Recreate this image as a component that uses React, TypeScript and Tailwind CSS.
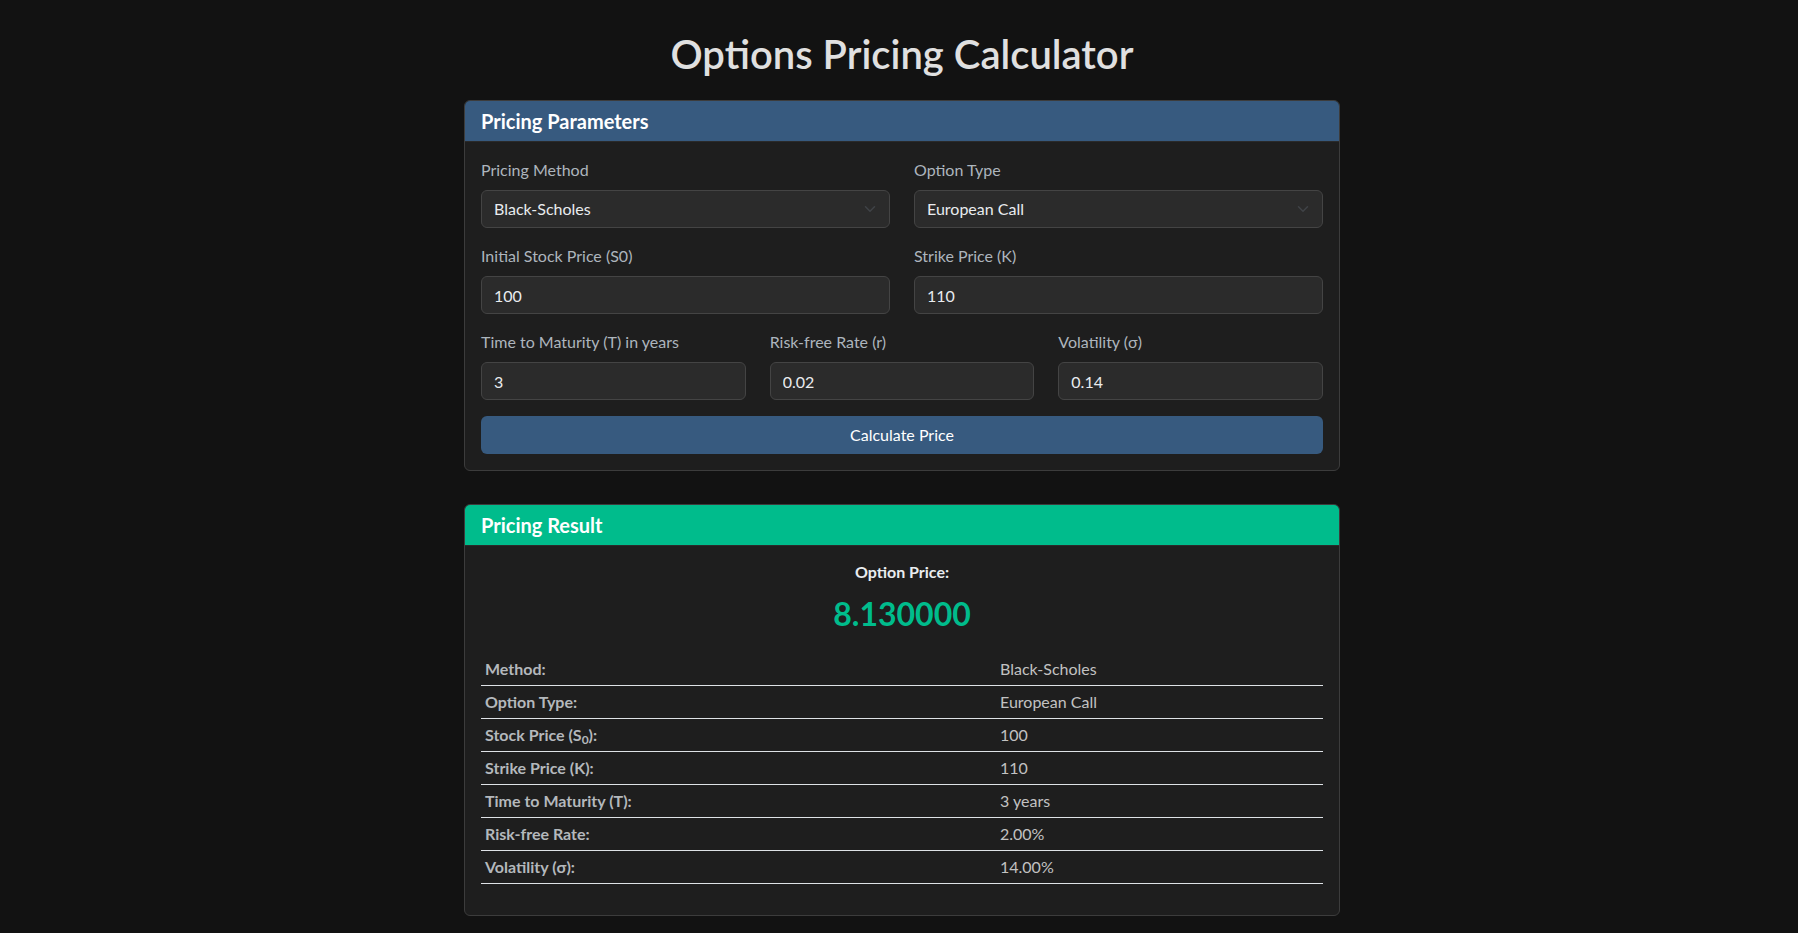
import React from "react";

const Chevron = () => (
  <svg
    className="pointer-events-none absolute right-[12px] top-1/2 -translate-y-1/2"
    width="16"
    height="12"
    viewBox="0 0 16 16"
    fill="none"
    stroke="#3f4246"
    strokeWidth="2"
    strokeLinecap="round"
    strokeLinejoin="round"
  >
    <path d="m2 5 6 6 6-6" />
  </svg>
);

const Label = ({ children }: { children: React.ReactNode }) => (
  <label className="block mb-2 text-[16px] leading-6 text-[#adb5bd]">{children}</label>
);

const inputCls =
  "block w-full h-[38px] px-3 rounded-[6px] border border-[#444444] bg-[#2b2b2b] text-[16px] leading-6 text-[#e9ecef] outline-none";

const SelectBox = ({ label, value }: { label: string; value: string }) => (
  <div className="mb-4">
    <Label>{label}</Label>
    <div className="relative">
      <select className={inputCls + " appearance-none"} defaultValue={value}>
        <option>{value}</option>
      </select>
      <Chevron />
    </div>
  </div>
);

const InputBox = ({ label, value }: { label: string; value: string }) => (
  <div className="mb-4">
    <Label>{label}</Label>
    <input className={inputCls} defaultValue={value} readOnly />
  </div>
);

const rows: { k: React.ReactNode; v: string }[] = [
  { k: "Method:", v: "Black-Scholes" },
  { k: "Option Type:", v: "European Call" },
  {
    k: (
      <>
        Stock Price (S<sub>0</sub>):
      </>
    ),
    v: "100",
  },
  { k: "Strike Price (K):", v: "110" },
  { k: "Time to Maturity (T):", v: "3 years" },
  { k: "Risk-free Rate:", v: "2.00%" },
  { k: "Volatility (σ):", v: "14.00%" },
];

export default function App() {
  return (
    <div
      className="min-h-screen bg-[#121212] pb-[18px]"
      style={{ fontFamily: "Lato, 'Open Sans', 'Noto Sans', sans-serif" }}
    >
      <div className="flex justify-center pl-[6px]">
        <div className="w-[876px]">
          <h1 className="pt-[30px] mb-[22px] text-center text-[40px] leading-[48px] font-semibold text-[#e0e0e0]">
            Options Pricing Calculator
          </h1>

          <div className="rounded-[6px] border border-[#3c3c3c] bg-[#1e1e1e] overflow-hidden">
            <div className="bg-[#375a7f] px-4 py-2 border-b border-[#2a2a2a]">
              <h5 className="text-[20px] leading-6 font-bold text-white">Pricing Parameters</h5>
            </div>
            <div className="p-4">
              <div className="grid grid-cols-2 gap-x-6">
                <SelectBox label="Pricing Method" value="Black-Scholes" />
                <SelectBox label="Option Type" value="European Call" />
                <InputBox label="Initial Stock Price (S0)" value="100" />
                <InputBox label="Strike Price (K)" value="110" />
              </div>
              <div className="grid grid-cols-3 gap-x-6">
                <InputBox label="Time to Maturity (T) in years" value="3" />
                <InputBox label="Risk-free Rate (r)" value="0.02" />
                <InputBox label="Volatility (σ)" value="0.14" />
              </div>
              <button className="block w-full h-[38px] rounded-[6px] bg-[#375a7f] text-[16px] leading-6 text-white">
                Calculate Price
              </button>
            </div>
          </div>

          <div className="mt-[33px] rounded-[6px] border border-[#3c3c3c] bg-[#1e1e1e] overflow-hidden">
            <div className="bg-[#00bc8c] px-4 py-2 border-b border-[#2a2a2a]">
              <h5 className="text-[20px] leading-6 font-bold text-white">Pricing Result</h5>
            </div>
            <div className="p-4">
              <div className="text-center">
                <div className="-mt-[2px] text-[16px] leading-6 font-bold text-[#e9ecef]">Option Price:</div>
                <div className="mt-[11px] mb-[20px] text-[32px] leading-[38px] font-bold text-[#00bc8c]">8.130000</div>
              </div>
              <table className="w-full mb-[15px] border-collapse">
                <tbody>
                  {rows.map((r, i) => (
                    <tr key={i} className="border-b border-[#dee2e6]">
                      <th className="w-[515px] px-1 py-1 text-left text-[16px] leading-6 font-bold text-[#b4b8bc]">
                        {r.k}
                      </th>
                      <td className="px-1 py-1 text-left text-[16px] leading-6 text-[#c2c2c2]">{r.v}</td>
                    </tr>
                  ))}
                </tbody>
              </table>
            </div>
          </div>
        </div>
      </div>
    </div>
  );
}
